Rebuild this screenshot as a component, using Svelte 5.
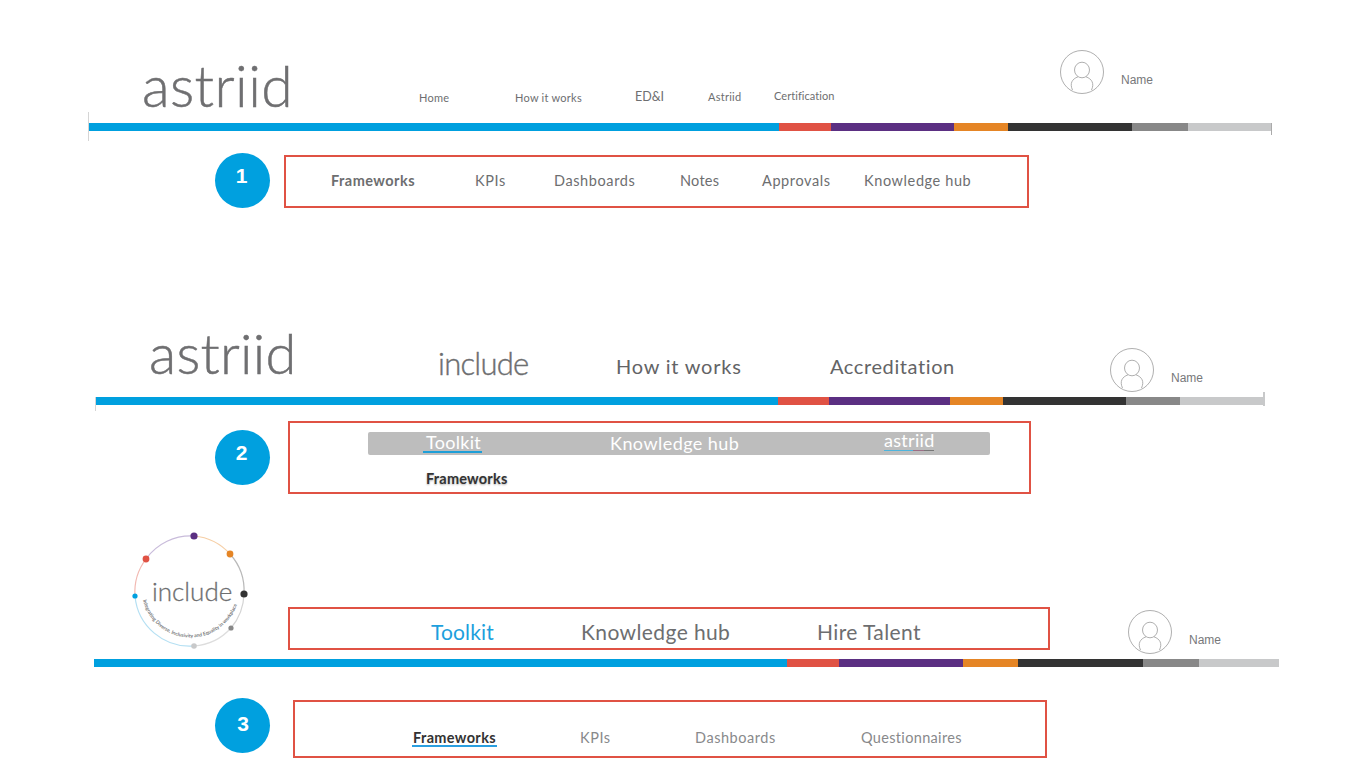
<script>
  const palette = ['#00a0df', '#e05244', '#5b2f82', '#e58525', '#333333', '#888888', '#c8c9ca'];
  const bars = [
    [691, 52, 123, 54, 124, 56, 84],
    [683, 51, 121, 53, 123, 54, 85],
    [693, 52, 124, 55, 125, 56, 80]
  ];
</script>

{#snippet bar(widths, cls)}
  <div class="bar {cls}">
    {#each widths as w, i}
      <span style="width:{w}px;background:{palette[i]}"></span>
    {/each}
  </div>
{/snippet}

{#snippet avatar()}
  <svg class="avatar" viewBox="0 0 44 44" width="44" height="44" aria-hidden="true">
    <circle cx="22" cy="22" r="21.5" />
    <ellipse cx="22" cy="20" rx="7.5" ry="7.8" />
    <path d="M12.5 40C9.5 33.5 12 29 18 26.8M31.5 40C34.5 33.5 32 29 26 26.8" />
  </svg>
{/snippet}

<main class="slide">
  <header class="head head1">
    <span></span>
    <span class="brand">astriid</span>
    <a class="n1 a">Home</a>
    <a class="n1 a">How it works</a>
    <a class="n1 b edi">ED&amp;I</a>
    <a class="n1 b">Astriid</a>
    <a class="n1 c">Certification</a>
    {@render avatar()}
    <span class="name">Name</span>
  </header>
  {@render bar(bars[0], 'bar1')}

  <section class="row row1">
    <div class="badge">1</div>
    <nav class="box tabs1">
      <a class="strong">Frameworks</a>
      <a>KPIs</a>
      <a>Dashboards</a>
      <a class="notes">Notes</a>
      <a>Approvals</a>
      <a>Knowledge hub</a>
    </nav>
  </section>

  <header class="head head2">
    <span></span>
    <span class="brand">astriid</span>
    <span class="include-word">include</span>
    <a class="n2 how">How it works</a>
    <a class="n2">Accreditation</a>
    {@render avatar()}
    <span class="name">Name</span>
  </header>
  {@render bar(bars[1], 'bar2')}

  <section class="row row2">
    <div class="badge">2</div>
    <div class="box box2">
      <nav class="greybar">
        <a class="under-blue">Toolkit</a>
        <a>Knowledge hub</a>
        <a class="under-multi">astriid</a>
      </nav>
      <a class="sub">Frameworks</a>
    </div>
  </section>

  <header class="head3">
    <svg class="ring" viewBox="0 0 130 130" width="130" height="130">
      <defs>
        <path id="curve" d="M13 70A49 49 0 0 0 108 71" />
      </defs>
      <g fill="none" stroke-width="1.2">
        <path d="M16 29A55 55 0 0 1 64 6" stroke="#c9bcdb" />
        <path d="M64 6A55 55 0 0 1 100 24" stroke="#f6cfa6" />
        <path d="M100 24A55 55 0 0 1 114 64" stroke="#b9b9b9" />
        <path d="M114 64A55 55 0 0 1 101 98" stroke="#d4d4d4" />
        <path d="M101 98A55 55 0 0 1 64 116" stroke="#dddddd" />
        <path d="M64 116A55 55 0 0 1 5 66" stroke="#b5e0f3" />
        <path d="M5 66A55 55 0 0 1 16 29" stroke="#f2b9b2" />
      </g>
      <circle cx="64" cy="6" r="3.6" fill="#5b2f82" />
      <circle cx="100" cy="24" r="3.4" fill="#e58525" />
      <circle cx="114" cy="64" r="3.6" fill="#333333" />
      <circle cx="101" cy="98" r="2.6" fill="#888888" />
      <circle cx="64" cy="116" r="2.8" fill="#c8c9ca" />
      <circle cx="5" cy="66" r="2.6" fill="#00a0df" />
      <circle cx="16" cy="29" r="3.4" fill="#e05244" />
      <text x="22" y="71" class="ring-word">include</text>
      <text class="ring-sub"><textPath href="#curve">Integrating Diverse, Inclusivity and Equality in workplace</textPath></text>
    </svg>
    <nav class="box tabs3a">
      <a class="active">Toolkit</a>
      <a>Knowledge hub</a>
      <a>Hire Talent</a>
    </nav>
    {@render avatar()}
    <span class="name">Name</span>
  </header>
  {@render bar(bars[2], 'bar3')}

  <section class="row row3">
    <div class="badge">3</div>
    <nav class="box tabs3b">
      <a class="current">Frameworks</a>
      <a>KPIs</a>
      <a>Dashboards</a>
      <a class="quest">Questionnaires</a>
    </nav>
  </section>
</main>

<style>
  :global(body) { margin: 0; background: #fff; }
  .slide {
    width: 1366px;
    height: 768px;
    overflow: hidden;
    background: #fff;
    font-family: Lato, "Open Sans", sans-serif;
    color: #6d6e70;
  }
  a { display: block; white-space: nowrap; }

  .head { display: grid; align-items: start; }
  .head1 { height: 123px; grid-template-columns: 142px 277px 96px 120px 73px 66px 286px 61px auto; }
  .head2 { height: 77px; margin-top: 112px; grid-template-columns: 149px 289px 178px 214px 280px 61px auto; }

  .brand { font-size: 57px; font-weight: 300; line-height: 60px; color: #6f6f71; letter-spacing: 0.4px; -webkit-text-stroke: 0.5px #6f6f71; }
  .head1 .brand { margin-top: 55px; }
  .head2 .brand { margin-top: 3px; font-size: 56px; letter-spacing: 0.3px; }

  .n1 { font-size: 11px; line-height: 14px; letter-spacing: 0.25px; color: #6d6e70; }
  .n1.a { margin-top: 91px; }
  .n1.b { margin-top: 90px; }
  .n1.c { margin-top: 89px; letter-spacing: 0.05px; }
  .n1.edi { font-size: 12.5px; letter-spacing: 0; }

  .avatar { display: block; fill: none; stroke: #9b9b9b; stroke-width: 0.8; }
  .head1 .avatar { margin-top: 50px; }
  .head2 .avatar { margin-top: 28px; }
  .name { font-family: "Liberation Sans", Arial, sans-serif; font-size: 12px; line-height: 14px; color: #77787a; }
  .head1 .name { margin-top: 73px; }
  .head2 .name { margin-top: 51px; }

  .include-word { margin-top: 24px; font-size: 31px; font-weight: 300; line-height: 38px; letter-spacing: -0.75px; color: #6d6e70; -webkit-text-stroke: 0.4px #6d6e70; }
  .n2 { margin-top: 34px; font-size: 20px; line-height: 24px; letter-spacing: 0.6px; color: #636466; }
  .n2.how { letter-spacing: 0.78px; }

  .bar { display: flex; height: 8px; position: relative; }
  .bar span { display: block; height: 100%; }
  .bar1 { margin-left: 88px; width: 1184px; }
  .bar2 { margin-left: 95px; width: 1170px; }
  .bar3 { margin-left: 94px; width: 1185px; }
  .bar1::before, .bar1::after, .bar2::before, .bar2::after { content: ''; position: absolute; width: 1px; background: #d5d5d5; }
  .bar1::before { left: 0; top: -11px; height: 29px; }
  .bar1::after { right: 0; top: 0; height: 12px; background: #aaaaaa; }
  .bar2::before { left: 0; top: 0; height: 14px; }
  .bar2::after { right: 0; top: -5px; height: 14px; width: 2px; background: #c8c9ca; }

  .row { display: grid; align-items: start; }
  .row1 { margin-top: 22px; height: 55px; grid-template-columns: 215px 69px 745px; }
  .row2 { margin-top: 16px; height: 73px; grid-template-columns: 215px 73px 743px; }
  .row3 { margin-top: 31px; grid-template-columns: 215px 78px 754px; }
  .badge {
    grid-column: 2;
    width: 55px;
    height: 55px;
    border-radius: 50%;
    background: #00a0df;
    color: #fff;
    font-family: "Liberation Sans", Arial, sans-serif;
    font-weight: 700;
    font-size: 21px;
    line-height: 45px;
    text-align: center;
    text-indent: -2px;
  }
  .row2 .badge { margin-top: 9px; }
  .row3 .badge { line-height: 52px; text-indent: 1px; }
  .box { border: 2px solid #e05244; box-sizing: border-box; }

  .tabs1 {
    margin-top: 2px;
    height: 53px;
    display: grid;
    grid-template-columns: 45px 144px 79px 126px 82px 102px auto;
    padding-top: 15px;
    font-size: 14.5px;
    line-height: 18px;
    letter-spacing: 0.6px;
  }
  .tabs1 a:first-child { grid-column: 2; }
  .strong { font-weight: 700; letter-spacing: 0.45px; }
  .notes { letter-spacing: 0.25px; }

  .box2 { height: 73px; padding: 9px 0 0 78px; }
  .greybar {
    width: 622px;
    height: 23px;
    background: #bdbdbd;
    border-radius: 2px;
    display: grid;
    grid-template-columns: 58px 184px 274px auto;
    color: #fff;
    font-size: 18px;
    line-height: 23px;
    letter-spacing: 0.45px;
  }
  .greybar a:first-child { grid-column: 2; }
  .under-blue, .under-multi { position: relative; align-self: start; }
  .under-blue { letter-spacing: 0.3px; margin-top: -1px; }
  .under-multi { margin-top: -3px; letter-spacing: 0.3px; }
  .under-blue::after, .under-multi::after { content: ''; position: absolute; left: -3px; height: 2px; }
  .under-blue::after { width: 59px; background: #1e9fd8; bottom: 1px; }
  .under-multi::after {
    left: 0;
    width: 50px;
    height: 1px;
    bottom: 1px;
    background: linear-gradient(to right, #4db5dd 0 58%, #9c6f86 58% 80%, #777 80%);
  }
  .sub { margin: 15px 0 0 58px; font-size: 14.5px; line-height: 18px; font-weight: 700; color: #333; letter-spacing: 0.2px; text-shadow: 0 1px 2px rgba(0,0,0,.3); }

  .head3 { height: 165px; display: grid; align-items: start; grid-template-columns: 125px 163px 762px 78px 61px auto; }
  .ring { grid-column: 2; display: block; margin: 36px 0 0 5px; overflow: visible; }
  .ring-word { font-family: Lato, sans-serif; font-size: 26px; font-weight: 300; fill: #6d6e70; stroke: #6d6e70; stroke-width: 0.3; }
  .ring-sub { font-family: Lato, sans-serif; font-size: 5px; font-weight: 700; fill: #77787a; }
  .tabs3a {
    margin-top: 113px;
    height: 43px;
    display: grid;
    grid-template-columns: 141px 150px 236px auto;
    font-size: 21px;
    line-height: 26px;
    letter-spacing: 0.4px;
    padding-top: 10px;
  }
  .tabs3a a:first-child { grid-column: 2; }
  .active { color: #1d9fdd; letter-spacing: 0.15px; }
  .head3 .avatar { grid-column: 5; margin-top: 116px; }
  .head3 .name { grid-column: 6; margin-top: 139px; }

  .tabs3b {
    margin-top: 2px;
    height: 58px;
    display: grid;
    grid-template-columns: 118px 167px 115px 166px auto;
    align-items: start;
    padding-top: 27px;
    font-size: 14.5px;
    line-height: 18px;
    letter-spacing: 0.55px;
    color: #88898b;
  }
  .tabs3b a:first-child { grid-column: 2; }
  .quest { letter-spacing: 0.33px; }
  .current { position: relative; justify-self: start; font-weight: 700; color: #333; letter-spacing: 0.35px; }
  .current::after { content: ''; position: absolute; left: -1px; right: -1px; bottom: 0; height: 2px; background: #2a9fe0; }
</style>
